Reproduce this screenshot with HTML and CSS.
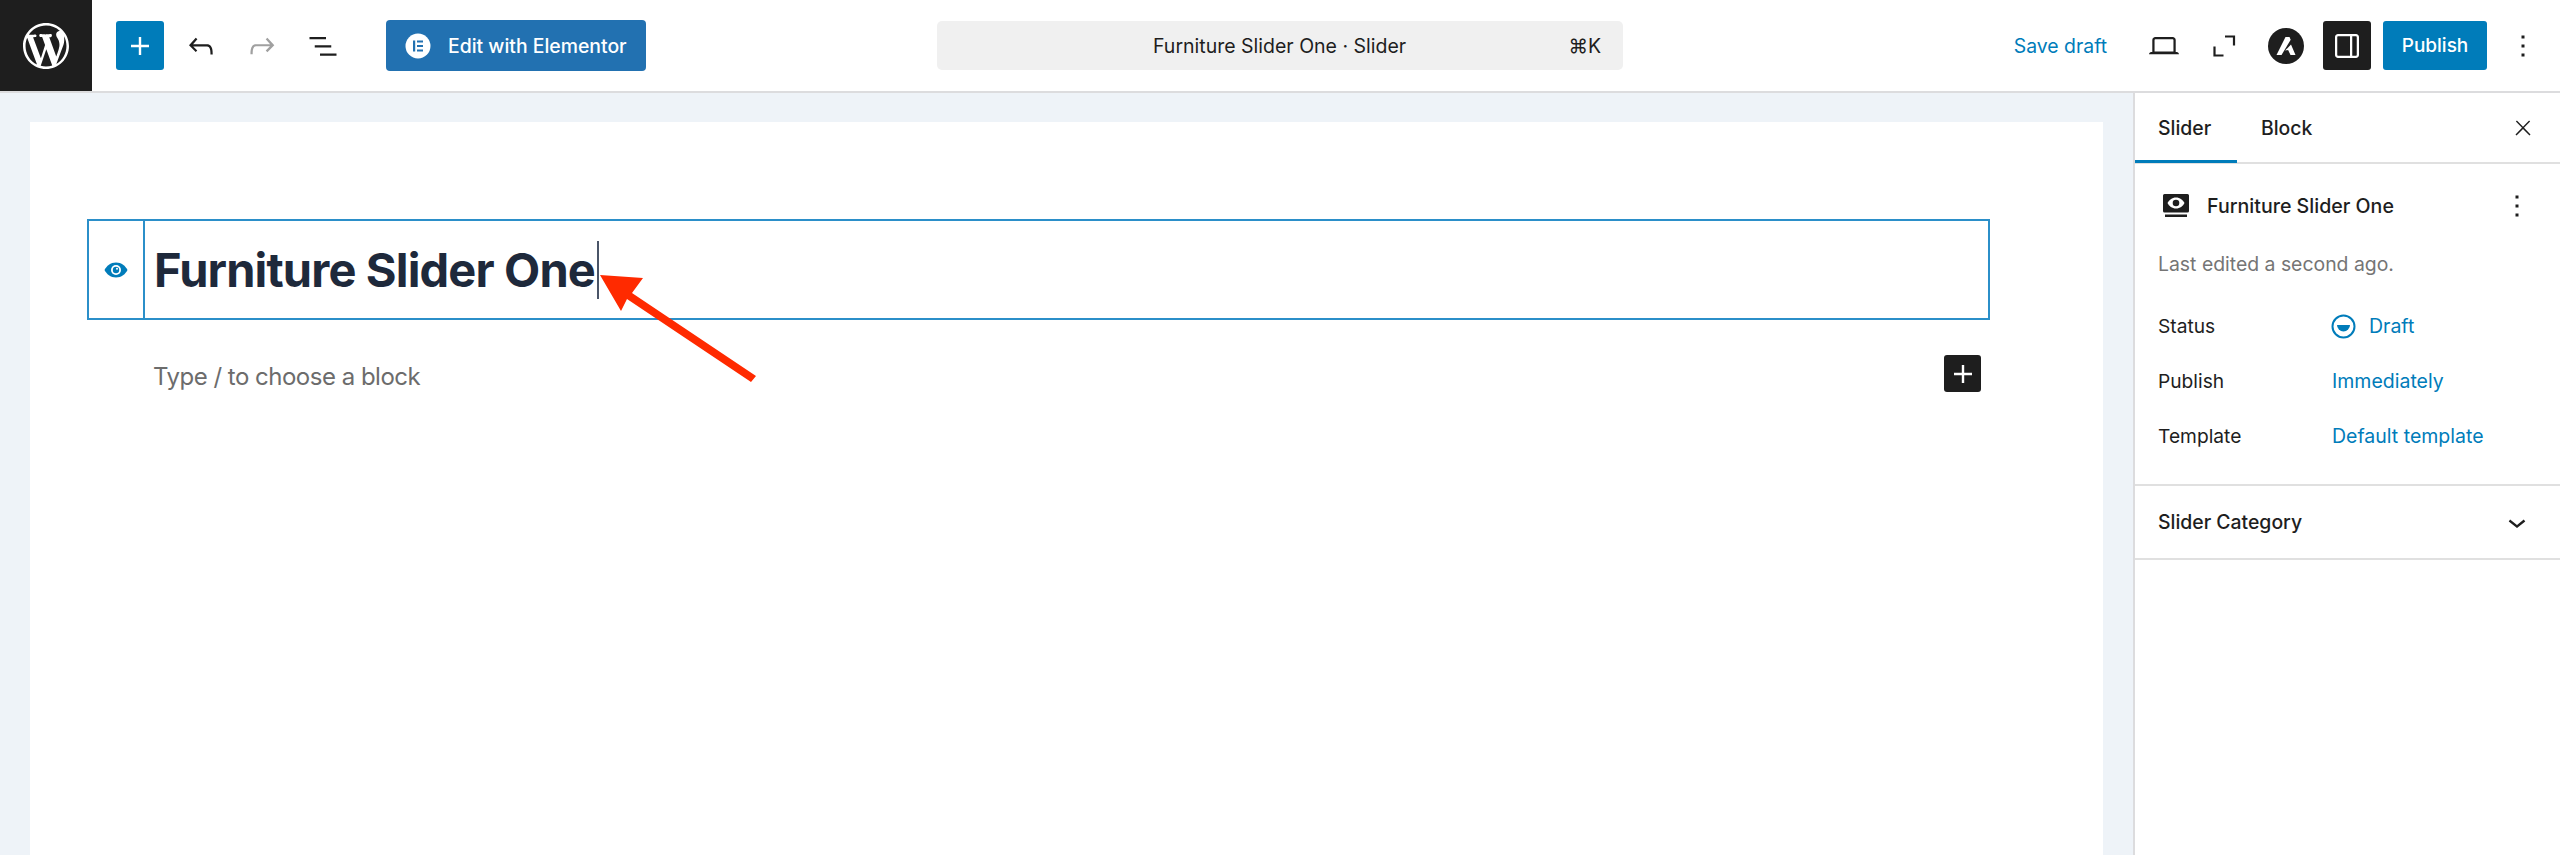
FILE: index.html
```html
<!DOCTYPE html>
<html lang="en">
<head>
    <meta charset="UTF-8">
    <title>Edit Slider</title>
    <link rel="stylesheet" href="styles.css">
</head>
<body>
    <header class="topbar">
        <a class="wp-logo">
            <svg width="46" height="46" viewBox="0 0 20 20" fill="#fff"><path d="M20 10c0-5.51-4.49-10-10-10C4.48 0 0 4.49 0 10c0 5.52 4.48 10 10 10 5.51 0 10-4.48 10-10zM7.78 15.37L4.37 6.22c.55-.02 1.17-.08 1.17-.08.5-.06.44-1.13-.06-1.11 0 0-1.45.11-2.37.11-.18 0-.37 0-.58-.01C4.12 2.69 6.87 1.11 10 1.11c2.33 0 4.45.87 6.05 2.34-.68-.11-1.65.39-1.65 1.58 0 .74.45 1.36.9 2.1.35.61.55 1.36.55 2.46 0 1.49-1.4 5-1.4 5l-3.03-8.37c.54-.02.82-.17.82-.17.5-.05.44-1.25-.06-1.22 0 0-1.44.12-2.38.12-.87 0-2.33-.12-2.33-.12-.5-.03-.56 1.2-.06 1.22l.92.08 1.26 3.41zM17.41 10c.24-.64.74-1.87.43-4.25.7 1.29 1.05 2.71 1.05 4.25 0 3.29-1.73 6.24-4.4 7.78.97-2.59 1.94-5.2 2.92-7.78zM6.1 18.09C3.12 16.65 1.11 13.53 1.11 10c0-1.3.23-2.48.72-3.59C3.25 10.3 4.67 14.2 6.1 18.09zm4.03-6.63l2.58 6.98c-.86.29-1.76.45-2.71.45-.79 0-1.57-.11-2.29-.33.81-2.38 1.62-4.74 2.42-7.1z"/></svg>
        </a>
        <div class="tools">
            <button class="tool tool-add">
                <svg width="36" height="36" viewBox="0 0 24 24" fill="#fff"><path d="M18 11.2h-5.2V6h-1.6v5.2H6v1.6h5.2V18h1.6v-5.2H18z"/></svg>
            </button>
            <button class="tool tool-icon">
                <svg width="36" height="36" viewBox="0 0 24 24" fill="#1e1e1e"><path d="M18.3 11.7c-.6-.6-1.4-.9-2.3-.9H6.7l2.9-3.3-1.1-1-4.5 5L8.5 16l1-1-2.7-2.7H16c.5 0 .9.2 1.3.5 1 1 1 3.4 1 4.5v.3h1.5v-.2c0-1.5 0-4.3-1.5-5.7z"/></svg>
            </button>
            <button class="tool tool-icon">
                <svg width="36" height="36" viewBox="0 0 24 24" fill="#a0a0a0"><path d="M15.6 6.5l-1.1 1 2.9 3.3H8c-.9 0-1.7.3-2.3.9-1.4 1.5-1.4 4.2-1.4 5.6v.2h1.5v-.3c0-1.1 0-3.5 1-4.5.3-.3.7-.5 1.3-.5h9.2L14.5 15l1.1 1.1 4.6-4.6-4.6-5z"/></svg>
            </button>
            <button class="tool tool-icon">
                <svg width="36" height="36" viewBox="0 0 24 24" fill="#1e1e1e"><path d="M3 6h11v1.5H3V6zm3.5 5.5h11V13h-11v-1.5zM21 17H10v1.5h11V17z"/></svg>
            </button>
            <button class="elementor-btn">
                <svg width="26" height="26" viewBox="0 0 26 26"><circle cx="13" cy="13" r="12.5" fill="#fff"/><path fill="#2271b1" d="M8 7.5h2.2v11H8zM12 7.5h6v2h-6zM12 12h6v2h-6zM12 16.500h6v2h-6z"/></svg>
                <span>Edit with Elementor</span>
            </button>
        </div>
        <div class="command">
            <span class="command-title">Furniture Slider One · Slider</span>
            <span class="command-key">⌘K</span>
        </div>
        <div class="actions">
            <a class="save-draft">Save draft</a>
            <button class="tool tool-laptop">
                <svg width="36" height="36" viewBox="0 0 24 24" fill="#1e1e1e"><path d="M20.500 16h-.7V8c0-1.100-.9-2-2-2H6.200c-1.100 0-2 .9-2 2v8h-.7c-.8 0-1.500.7-1.500 1.500h20c0-.8-.7-1.500-1.500-1.500zM5.700 8c0-.3.2-.5.5-.5h11.600c.3 0 .5.2.5.5v7.600H5.700V8z"/></svg>
            </button>
            <button class="tool tool-expand">
                <svg width="24" height="24" viewBox="0 0 24 24" fill="none" stroke="#1e1e1e" stroke-width="2.200"><path d="M13 2.500h9v9M2.500 12.500v9h9"/></svg>
            </button>
            <button class="astra">
                <svg width="36" height="36" viewBox="0 0 36 36"><circle cx="18" cy="18" r="18" fill="#1e1e1e"/><path fill="#fff" d="M17.500 9h4l1.200 2.800L13.500 27h-5zM23 16.500L27.500 27h-5l-2.400-5-3 .6z"/></svg>
            </button>
            <button class="tool tool-drawer">
                <svg width="36" height="36" viewBox="0 0 24 24" fill="#fff"><path d="M18 4H6c-1.100 0-2 .9-2 2v12c0 1.100.9 2 2 2h12c1.100 0 2-.9 2-2V6c0-1.100-.9-2-2-2zm-4 14.500H6c-.3 0-.5-.2-.5-.5V6c0-.3.2-.5.5-.5h8v13zm4.500-.5c0 .3-.2.5-.5.5h-2.500v-13H18c.3 0 .5.2.5.5v12z"/></svg>
            </button>
            <button class="publish">Publish</button>
            <button class="tool tool-more">
                <svg width="36" height="36" viewBox="0 0 24 24" fill="#1e1e1e"><path d="M13 19h-2v-2h2v2zm0-6h-2v-2h2v2zm0-6h-2V5h2v2z"/></svg>
            </button>
        </div>
    </header>

    <div class="workspace">
        <main class="editor">
            <div class="canvas">
                <div class="title-block">
                    <div class="title-eye">
                        <svg width="24" height="18" viewBox="0 0 24 18"><path fill="#007cba" d="M12 1.500C6.500 1.500 2.500 5 .5 9c2 4 6 7.500 11.500 7.500S21.500 13 23.500 9C21.500 5 17.500 1.500 12 1.500z"/><circle cx="12" cy="9" r="5" fill="#fff"/><circle cx="12" cy="9" r="3.200" fill="#007cba"/><circle cx="13" cy="7.800" r="1" fill="#fff"/></svg>
                    </div>
                    <h1 class="post-title">Furniture Slider One<span class="caret"></span></h1>
                </div>
                <div class="empty-block">
                    <span class="placeholder">Type / to choose a block</span>
                    <button class="inline-add">
                        <svg width="36" height="36" viewBox="0 0 24 24" fill="#fff"><path d="M18 11.200h-5.200V6h-1.600v5.200H6v1.600h5.200V18h1.600v-5.200H18z"/></svg>
                    </button>
                </div>
                <!-- annotation arrow on top of the screenshot -->
                <svg class="arrow" width="170" height="110" viewBox="0 0 170 110"><path fill="#ff2a00" d="M1 1 L44 4 L33 19 L157 102 L152 108 L28 25 L22 37z"/></svg>
            </div>
        </main>

        <aside class="sidebar">
            <div class="tabs">
                <a class="tab tab-active">Slider</a>
                <a class="tab">Block</a>
                <svg class="tabs-close" width="24" height="24" viewBox="0 0 24 24" fill="#1e1e1e"><path d="M13 11.800l6.100-6.300-1-1-6.100 6.200-6.100-6.200-1 1 6.100 6.300-6.500 6.700 1 1 6.500-6.600 6.500 6.600 1-1z"/></svg>
            </div>
            <section class="summary">
                <div class="summary-head">
                    <svg width="26" height="24" viewBox="0 0 26 24"><path fill="#1e1e1e" d="M1.500 0h23A1.500 1.500 0 0 1 26 1.500V17a1.500 1.500 0 0 1-1.500 1.500h-23A1.500 1.500 0 0 1 0 17V1.500A1.500 1.500 0 0 1 1.500 0zM2 20.500h22V23H2z"/><path fill="#fff" d="M13 3.500c-4 0-7 2.500-8.500 5.500 1.500 3 4.500 5.500 8.500 5.500s7-2.500 8.500-5.500C20 6 17 3.500 13 3.500z"/><circle cx="13" cy="9" r="3.300" fill="#1e1e1e"/></svg>
                    <span class="summary-name">Furniture Slider One</span>
                    <svg class="summary-more" width="36" height="36" viewBox="0 0 24 24" fill="#1e1e1e"><path d="M13 19h-2v-2h2v2zm0-6h-2v-2h2v2zm0-6h-2V5h2v2z"/></svg>
                </div>
                <p class="summary-edited">Last edited a second ago.</p>
                <div class="row">
                    <span class="row-label">Status</span>
                    <a class="row-value row-status">
                        <svg width="25" height="25" viewBox="0 0 25 25"><circle cx="12.500" cy="12.500" r="11" fill="none" stroke="#007cba" stroke-width="2"/><path fill="#007cba" d="M6 11h13a6.500 6.500 0 0 1-13 0z"/></svg>
                        Draft
                    </a>
                </div>
                <div class="row">
                    <span class="row-label">Publish</span>
                    <a class="row-value">Immediately</a>
                </div>
                <div class="row">
                    <span class="row-label">Template</span>
                    <a class="row-value">Default template</a>
                </div>
            </section>
            <section class="category">
                <span class="category-name">Slider Category</span>
                <svg width="36" height="36" viewBox="0 0 24 24" fill="#1e1e1e"><path d="M17.500 11.600L12 16l-5.500-4.400.9-1.200L12 14l4.500-3.600 1 1.200z"/></svg>
            </section>
        </aside>
    </div>
</body>
</html>
```

FILE: styles.css
```css
* {
    box-sizing: border-box;
}
html, body {
    height: 100%;
}
body {
    margin: 0;
    font-family: Inter, "Liberation Sans", sans-serif;
    color: #1e1e1e;
    background: #fff;
    overflow: hidden;
}
button {
    border: none;
    background: none;
    padding: 0;
    font-family: inherit;
    cursor: pointer;
}
svg {
    display: block;
    flex: none;
}

/* top bar */
.topbar {
    height: 93px;
    display: flex;
    align-items: center;
    border-bottom: 2px solid #dcdcde;
}
.wp-logo {
    width: 92px;
    height: 91px;
    background: #1e1e1e;
    display: flex;
    align-items: center;
    justify-content: center;
}
.tools {
    display: flex;
    align-items: center;
    margin-left: 24px;
}
.tool {
    display: flex;
    align-items: center;
    justify-content: center;
    height: 49px;
    border-radius: 3px;
}
.tool-add {
    width: 48px;
    background: #007cba;
}
.tool-icon {
    width: 36px;
    margin-left: 25px;
}
.tool-add + .tool-icon {
    margin-left: 19px;
}
.elementor-btn {
    display: flex;
    align-items: center;
    width: 260px;
    height: 51px;
    margin-left: 45px;
    padding-left: 19px;
    background: #2271b1;
    border-radius: 4px;
    color: #fff;
    font-size: 19.4px;
    font-weight: 500;
}
.elementor-btn span {
    margin-left: 17px;
}
.command {
    width: 686px;
    height: 49px;
    margin-left: 291px;
    padding: 0 22px 0 216px;
    display: flex;
    align-items: center;
    justify-content: space-between;
    background: #f0f0f0;
    border-radius: 5px;
    font-size: 19.5px;
}
.actions {
    display: flex;
    align-items: center;
    margin-left: auto;
    padding-right: 19px;
}
.save-draft {
    color: #007cba;
    font-size: 19.4px;
}
.tool-laptop {
    width: 36px;
    margin-left: 39px;
}
.tool-expand {
    width: 24px;
    margin-left: 30px;
}
.astra {
    margin-left: 32px;
}
.tool-drawer {
    width: 48px;
    margin-left: 19px;
    background: #1e1e1e;
}
.publish {
    width: 104px;
    height: 49px;
    margin-left: 12px;
    background: #007cba;
    border-radius: 3px;
    color: #fff;
    font-size: 19px;
    font-weight: 500;
}
.tool-more {
    width: 36px;
    margin-left: 18px;
}

/* editor area */
.workspace {
    display: flex;
    height: calc(100% - 93px);
}
.editor {
    flex: 1;
    padding: 29px 30px 0;
    background: #eef3f8;
}
.canvas {
    position: relative;
    height: 100%;
    padding: 97px 113px 0 57px;
    background: #fff;
}
.title-block {
    display: flex;
    height: 101px;
    border: 2px solid #2b8fc9;
}
.title-eye {
    width: 56px;
    display: flex;
    align-items: center;
    justify-content: center;
    border-right: 2px solid #2b8fc9;
}
.post-title {
    margin: 0 0 0 9px;
    font-size: 47px;
    font-weight: 700;
    letter-spacing: -.85px;
    color: #1e293b;
    line-height: 96px;
    display: flex;
    align-items: center;
}
.caret {
    width: 2px;
    height: 58px;
    margin-left: 2px;
    background: #4a5568;
}
.empty-block {
    display: flex;
    align-items: center;
    justify-content: space-between;
    margin-top: 35px;
    padding: 0 9px 0 66px;
}
.placeholder {
    padding-top: 6px;
    font-size: 24px;
    letter-spacing: -.5px;
    color: #6c6c6c;
}
.inline-add {
    width: 37px;
    height: 37px;
    display: flex;
    align-items: center;
    justify-content: center;
    background: #1e1e1e;
    border-radius: 3px;
}
.arrow {
    position: absolute;
    left: 569px;
    top: 152px;
}

/* sidebar */
.sidebar {
    width: 427px;
    border-left: 2px solid #dcdcde;
    background: #fff;
}
.tabs {
    display: flex;
    align-items: center;
    height: 71px;
    border-bottom: 2px solid #e0e0e0;
    font-size: 19.4px;
    font-weight: 500;
}
.tab {
    height: 71px;
    display: flex;
    align-items: center;
    padding: 0 24px;
}
.tab-active {
    width: 102px;
    padding: 3px 0 0 23px;
    border-bottom: 3px solid #007cba;
}
.tabs-close {
    margin-left: auto;
    margin-right: 25px;
}
.summary {
    height: 322px;
    padding: 24px 23px 0;
    border-bottom: 2px solid #e0e0e0;
}
.summary-head {
    display: flex;
    align-items: center;
    height: 36px;
    margin-left: 5px;
}
.summary-name {
    margin-left: 18px;
    font-size: 19.6px;
    font-weight: 500;
}
.summary-more {
    margin-left: auto;
    margin-right: 2px;
}
.summary-edited {
    margin: 28px 0 38px;
    font-size: 19.4px;
    line-height: 24px;
    color: #757575;
}
.row {
    display: flex;
    align-items: center;
    height: 24px;
    margin-bottom: 31px;
    font-size: 19.2px;
}
.row-label {
    width: 174px;
}
.row-value {
    color: #007cba;
    font-size: 19.5px;
}
.row-status {
    display: flex;
    align-items: center;
    gap: 13px;
    margin-left: -1px;
}
.category {
    display: flex;
    align-items: center;
    justify-content: space-between;
    height: 74px;
    padding: 0 25px 0 23px;
    border-bottom: 2px solid #e0e0e0;
    font-size: 19.4px;
    font-weight: 500;
}
```
